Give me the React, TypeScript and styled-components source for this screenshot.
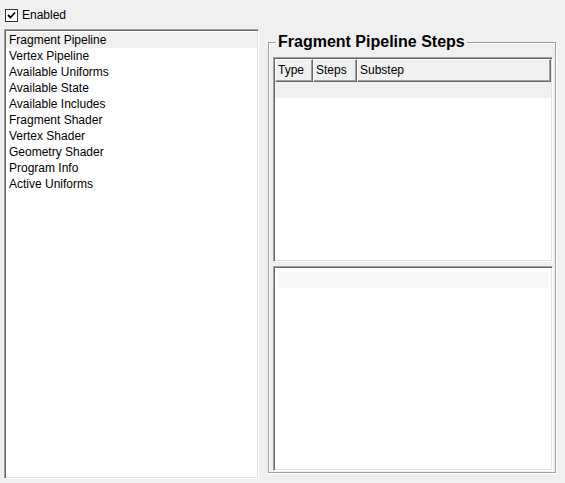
import React from 'react';
import styled, { createGlobalStyle } from 'styled-components';

const GlobalStyle = createGlobalStyle`
    html, body {
        margin: 0;
        padding: 0;
        background: #f0f0f0;
    }
`;

const Page = styled.div`
    width: 565px;
    height: 483px;
    background: #f0f0f0;
    font-family: 'Liberation Sans', Arial, sans-serif;
    font-size: 12px;
    color: #000;
    display: flex;
    flex-direction: column;
    overflow: hidden;
`;

const CheckRow = styled.label`
    display: flex;
    align-items: center;
    gap: 4px;
    height: 29px;
    padding: 1px 0 0 5px;
    box-sizing: border-box;
`;

const CheckBox = styled.span`
    width: 13px;
    height: 13px;
    box-sizing: border-box;
    border: 1px solid #333;
    background: #fff;
    display: flex;
    align-items: center;
    justify-content: center;
`;

const Main = styled.div`
    display: flex;
    align-items: flex-start;
    padding: 0 4px;
    gap: 9px;
`;

const Sunken = styled.div`
    box-sizing: border-box;
    background: #fff;
    border-style: solid;
    border-width: 1px;
    border-color: #a0a0a0 #fff #fff #a0a0a0;
    box-shadow: inset 1px 1px 0 #696969, inset -1px -1px 0 #e3e3e3;
`;

const ListBox = styled(Sunken)`
    width: 255px;
    height: 450px;
    padding: 2px 1px;
`;

const ListItem = styled.div<{ $selected?: boolean }>`
    height: 16px;
    line-height: 16px;
    padding-left: 3px;
    background: ${p => (p.$selected ? '#f0f0f0' : 'transparent')};
    white-space: nowrap;
`;

const Group = styled.fieldset`
    margin: 4px 0 0 0;
    width: 288px;
    box-sizing: border-box;
    border: 1px solid #a0a0a0;
    box-shadow: 1px 1px 0 #fff, inset 1px 1px 0 #fff;
    padding: 6px 2px 1px 4px;
    min-inline-size: 0;
    display: flex;
    flex-direction: column;
    gap: 4px;
`;

const Legend = styled.legend`
    font-size: 16px;
    font-weight: bold;
    line-height: 18px;
    padding: 0 2px;
    margin-left: 3px;
    background: #f0f0f0;
`;

const Pane = styled(Sunken)`
    width: 280px;
    height: 205px;
    padding: 1px;
    display: flex;
    flex-direction: column;
`;

const Header = styled.div`
    display: flex;
    height: 23px;
    flex-shrink: 0;
`;

const HeaderCell = styled.div<{ $width?: number }>`
    box-sizing: border-box;
    ${p => (p.$width ? `width: ${p.$width}px;` : 'flex: 1;')}
    height: 23px;
    background: #f0f0f0;
    border-style: solid;
    border-width: 1px;
    border-color: #fff #696969 #696969 #fff;
    box-shadow: inset -1px -1px 0 #a0a0a0;
    padding: 0 0 0 2px;
    line-height: 21px;
    white-space: nowrap;
`;

const StripeRow = styled.div<{ $tone: string; $inset?: number }>`
    height: 16px;
    flex-shrink: 0;
    background: ${p => p.$tone};
    margin: ${p => (p.$inset ? `${p.$inset + 1}px ${p.$inset}px 0` : '0')};
`;

const items = [
    'Fragment Pipeline',
    'Vertex Pipeline',
    'Available Uniforms',
    'Available State',
    'Available Includes',
    'Fragment Shader',
    'Vertex Shader',
    'Geometry Shader',
    'Program Info',
    'Active Uniforms',
];

export default function App() {
    return (
        <Page>
            <GlobalStyle />
            <CheckRow>
                <CheckBox>
                    <svg width='9' height='9' viewBox='0 0 9 9'>
                        <path
                            d='M1 4 L3.5 6.5 L8 1.5'
                            fill='none'
                            stroke='#000'
                            strokeWidth='1.8'
                        />
                    </svg>
                </CheckBox>
                <span>Enabled</span>
            </CheckRow>
            <Main>
                <ListBox>
                    {items.map((name, i) => (
                        <ListItem key={name} $selected={i === 0}>
                            {name}
                        </ListItem>
                    ))}
                </ListBox>
                <Group>
                    <Legend>Fragment Pipeline Steps</Legend>
                    <Pane>
                        <Header>
                            <HeaderCell $width={38}>Type</HeaderCell>
                            <HeaderCell $width={44}>Steps</HeaderCell>
                            <HeaderCell>Substep</HeaderCell>
                        </Header>
                        <StripeRow $tone='#f0f0f0' />
                    </Pane>
                    <Pane>
                        <StripeRow $tone='#f8f8f8' $inset={3} />
                    </Pane>
                </Group>
            </Main>
        </Page>
    );
}
